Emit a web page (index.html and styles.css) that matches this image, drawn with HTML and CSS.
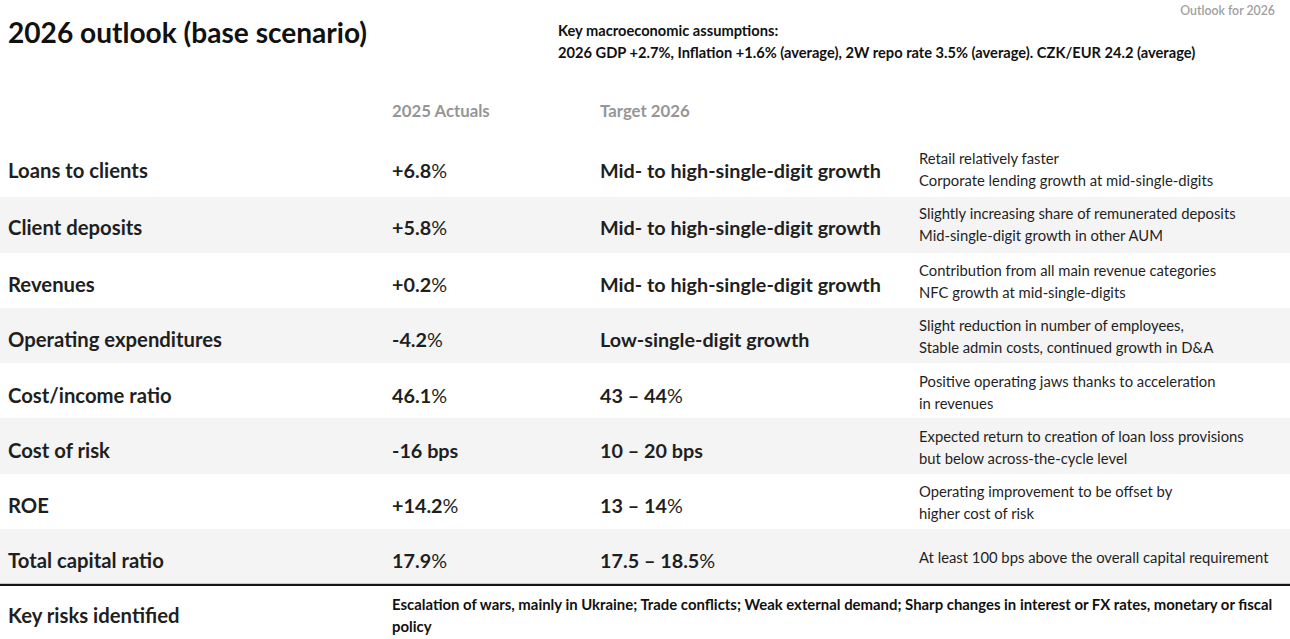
FILE: index.html
```html
<!DOCTYPE html>
<html lang="en">
<head>
<meta charset="utf-8">
<title>2026 outlook (base scenario)</title>
<link rel="stylesheet" href="styles.css">
</head>
<body>
<div class="page">
  <header class="top">
    <h1 class="title">2026 outlook (base scenario)</h1>
    <div class="macro">
      <div>Key macroeconomic assumptions:</div>
      <div>2026 GDP +2.7%, Inflation +1.6% (average), 2W repo rate 3.5% (average). CZK/EUR 24.2 (average)</div>
    </div>
    <div class="tag">Outlook for 2026</div>
  </header>

  <div class="row head">
    <div></div>
    <div class="colhead">2025 Actuals</div>
    <div class="colhead">Target 2026</div>
    <div></div>
  </div>

  <div class="table">
    <div class="row">
      <div class="label">Loans to clients</div>
      <div class="val">+6.8<span class="pct">%</span></div>
      <div class="val">Mid- to high-single-digit growth</div>
      <div class="note">Retail relatively faster<br>Corporate lending growth at mid-single-digits</div>
    </div>
    <div class="row alt">
      <div class="label">Client deposits</div>
      <div class="val">+5.8<span class="pct">%</span></div>
      <div class="val">Mid- to high-single-digit growth</div>
      <div class="note">Slightly increasing share of remunerated deposits<br>Mid-single-digit growth in other AUM</div>
    </div>
    <div class="row">
      <div class="label">Revenues</div>
      <div class="val">+0.2<span class="pct">%</span></div>
      <div class="val">Mid- to high-single-digit growth</div>
      <div class="note">Contribution from all main revenue categories<br>NFC growth at mid-single-digits</div>
    </div>
    <div class="row alt">
      <div class="label">Operating expenditures</div>
      <div class="val">-4.2<span class="pct">%</span></div>
      <div class="val">Low-single-digit growth</div>
      <div class="note">Slight reduction in number of employees,<br>Stable admin costs, continued growth in D&amp;A</div>
    </div>
    <div class="row">
      <div class="label">Cost/income ratio</div>
      <div class="val">46.1<span class="pct">%</span></div>
      <div class="val">43 – 44<span class="pct">%</span></div>
      <div class="note">Positive operating jaws thanks to acceleration<br>in revenues</div>
    </div>
    <div class="row alt">
      <div class="label">Cost of risk</div>
      <div class="val">-16 bps</div>
      <div class="val">10 – 20 bps</div>
      <div class="note">Expected return to creation of loan loss provisions<br>but below across-the-cycle level</div>
    </div>
    <div class="row">
      <div class="label">ROE</div>
      <div class="val">+14.2<span class="pct">%</span></div>
      <div class="val">13 – 14<span class="pct">%</span></div>
      <div class="note">Operating improvement to be offset by<br>higher cost of risk</div>
    </div>
    <div class="row alt last">
      <div class="label">Total capital ratio</div>
      <div class="val">17.9<span class="pct">%</span></div>
      <div class="val">17.5 – 18.5<span class="pct">%</span></div>
      <div class="note">At least 100 bps above the overall capital requirement</div>
    </div>
  </div>

  <div class="risks">
    <div class="label">Key risks identified</div>
    <div class="risktext">Escalation of wars, mainly in Ukraine; Trade conflicts; Weak external demand; Sharp changes in interest or FX rates, monetary or fiscal policy</div>
  </div>
</div>
</body>
</html>
```
FILE: styles.css
```css
html, body {
  margin: 0;
  padding: 0;
  background: #ffffff;
}
body {
  font-family: Lato, "Noto Sans", sans-serif;
  color: #1f1f1f;
  width: 1290px;
  height: 639px;
  overflow: hidden;
}
.page {
  display: flex;
  flex-direction: column;
}
.top {
  display: grid;
  grid-template-columns: 550px minmax(0, 1fr) auto;
  padding: 0 15px 0 8px;
  height: 88px;
  align-items: start;
}
.title {
  margin: 15px 0 0 0;
  font-size: 28.1px;
  line-height: 34px;
  font-weight: 700;
  color: #111;
}
.macro {
  margin-top: 20px;
  font-size: 14.65px;
  line-height: 22px;
  font-weight: 700;
  color: #111;
  white-space: nowrap;
}
.tag {
  margin-top: 3px;
  font-size: 12.3px;
  line-height: 16px;
  color: #a0a0a0;
  font-weight: 600;
}
.row {
  display: grid;
  grid-template-columns: 384px 208px 319px 1fr;
  padding-left: 8px;
  height: 55.25px;
  align-items: center;
}
.row.alt {
  background: #f4f4f4;
}
.row.head {
  height: 54px;
  padding-bottom: 10px;
  box-sizing: border-box;
}
.colhead {
  font-size: 16.8px;
  font-weight: 700;
  color: #969696;
}
.label {
  font-size: 20.3px;
  font-weight: 700;
  color: #1f1f1f;
  padding-top: 8px;
}
.val {
  font-size: 19.8px;
  font-weight: 700;
  color: #1f1f1f;
  padding-top: 8px;
}
.row:nth-child(1) .label,
.row:nth-child(1) .val {
  padding-top: 0;
}
.row:nth-child(2) .label,
.row:nth-child(2) .val {
  padding-top: 4px;
}
.pct {
  font-weight: 400;
}
.note {
  font-size: 14.8px;
  line-height: 22px;
  color: #1f1f1f;
  padding-top: 2px;
}
.row:nth-child(1) .note,
.row:nth-child(2) .note {
  padding-top: 0;
  padding-bottom: 2px;
}
.row.last {
  border-bottom: 2px solid #151515;
  box-shadow: inset 0 -1px 0 #c8c8c8;
  box-sizing: content-box;
}
.table {
  display: flex;
  flex-direction: column;
}
.risks {
  display: grid;
  grid-template-columns: 384px 1fr;
  padding-left: 8px;
  height: 53px;
  align-items: center;
}
.risks .label {
  padding-top: 5px;
}
.risktext {
  font-size: 14.9px;
  line-height: 22px;
  font-weight: 700;
  color: #111;
  padding-right: 4px;
  padding-top: 4px;
}
```
